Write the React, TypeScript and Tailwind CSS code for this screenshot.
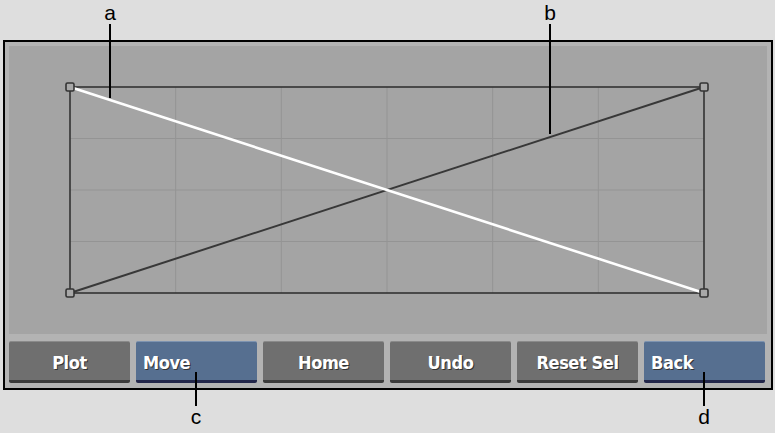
const buttons = [
  { label: 'Plot', active: false },
  { label: 'Move', active: true },
  { label: 'Home', active: false },
  { label: 'Undo', active: false },
  { label: 'Reset Sel', active: false },
  { label: 'Back', active: true },
]

const Callout = ({ letter, x, top, lineTop, lineH }: { letter: string; x: number; top: number; lineTop: number; lineH: number }) => (
  <>
    <div className="absolute w-[2px] bg-black" style={{ left: x - 1, top: lineTop, height: lineH }} />
    <span className="absolute text-[21px] leading-none text-black -translate-x-1/2" style={{ left: x, top }}>
      {letter}
    </span>
  </>
)

const Grid = () => {
  const x0 = 61, x1 = 695, y0 = 41, y1 = 247
  const cols = [1, 2, 3, 4, 5].map((i) => x0 + ((x1 - x0) * i) / 6)
  const rows = [1, 2, 3].map((i) => y0 + ((y1 - y0) * i) / 4)
  return (
    <svg width="757" height="288" className="block">
      {cols.map((x) => (
        <line key={x} x1={x} y1={y0} x2={x} y2={y1} stroke="#949494" strokeWidth="1" />
      ))}
      {rows.map((y) => (
        <line key={y} x1={x0} y1={y} x2={x1} y2={y} stroke="#949494" strokeWidth="1" />
      ))}
      <rect x={x0} y={y0} width={x1 - x0} height={y1 - y0} fill="none" stroke="#333" strokeWidth="1.6" />
      <line x1={x0} y1={y1} x2={x1} y2={y0} stroke="#383838" strokeWidth="2" />
      <line x1={x0} y1={y0} x2={x1} y2={y1} stroke="#ffffff" strokeWidth="2.6" />
      {[[x0, y0], [x1, y0], [x0, y1], [x1, y1]].map(([x, y]) => (
        <rect key={`${x}-${y}`} x={x - 4} y={y - 4} width="8" height="8" rx="1.5" fill="#a8a8a8" stroke="#333" strokeWidth="1.6" />
      ))}
    </svg>
  )
}

export default function App() {
  return (
    <div className="relative w-[775px] h-[433px] bg-[#dedede] pt-[40px] pl-[3px] font-['Liberation_Sans',Arial,sans-serif]">
      <div className="w-[770px] h-[350px] border-2 border-black bg-[#b3b3b3] p-[4px] flex flex-col gap-[7px]">
        <div className="bg-[#a4a4a4] h-[288px]">
          <Grid />
        </div>
        <div className="flex gap-[6px] pr-[2px]">
          {buttons.map((b) => (
            <div
              key={b.label}
              className={`w-[121px] h-[42px] rounded-[2px] flex items-center pt-[3px] text-white text-[18px] font-bold font-['DejaVu_Sans_Condensed','DejaVu_Sans',sans-serif] tracking-[-0.4px] [text-shadow:1px_1px_0_#333] ${
                b.active
                  ? 'bg-[#566f90] border-t border-[#7d93b0] border-b-[3px] border-b-[#22264a] justify-start pl-[7px]'
                  : 'bg-[#6f6f6f] border-t border-[#8a8a8a] border-b-[3px] border-b-[#3a3a3a] justify-center'
              }`}
            >
              {b.label}
            </div>
          ))}
        </div>
      </div>
      <Callout letter="a" x={110} top={2} lineTop={24} lineH={74} />
      <Callout letter="b" x={550} top={2} lineTop={24} lineH={110} />
      <Callout letter="c" x={196} top={406} lineTop={372} lineH={34} />
      <Callout letter="d" x={704} top={406} lineTop={372} lineH={34} />
    </div>
  )
}
